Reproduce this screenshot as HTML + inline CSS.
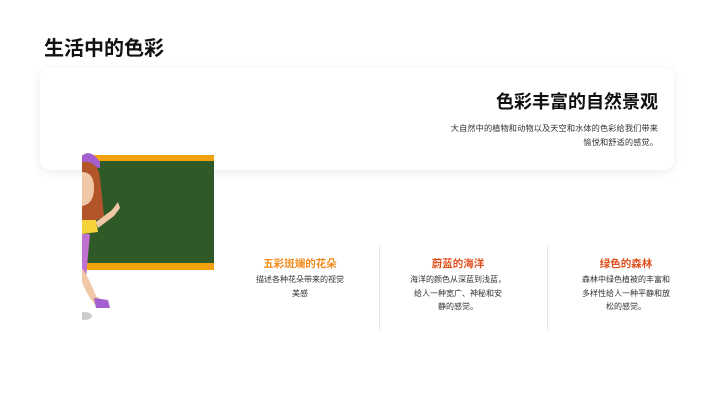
<!DOCTYPE html>
<html><head><meta charset="utf-8"><style>
body{margin:0;width:720px;height:404px;background:#fff;position:relative;overflow:hidden;font-family:"Liberation Sans","Noto Sans CJK SC",sans-serif;}
.a{position:absolute;}
h1{position:absolute;left:44px;top:32px;margin:0;font-size:20px;font-weight:bold;color:#111;}
.card{left:40px;top:68px;width:634px;height:102px;border-radius:10px;background:#fff;box-shadow:0 2px 10px rgba(0,0,0,0.08);}
.h2{right:62px;top:88px;font-size:18px;font-weight:bold;color:#111;}
.p{right:62px;top:122px;font-size:8.2px;line-height:14px;text-align:right;color:#333;white-space:nowrap;letter-spacing:0.1px;}
.col{top:256px;width:110px;text-align:center;font-size:8px;line-height:13.5px;color:#333;white-space:nowrap;}
.col b{display:block;font-size:10.5px;line-height:16px;margin-bottom:1px;}
.div{top:246px;width:1px;height:84px;background:#e6e6e6;}
</style></head><body>
<h1>生活中的色彩</h1>
<div class="a card"></div>
<div class="a h2">色彩丰富的自然景观</div>
<div class="a p">大自然中的植物和动物以及天空和水体的色彩给我们带来<br>愉悦和舒适的感觉。</div>
<div class="a" style="left:82px;top:155px;width:132px;height:115px;background:#f2a20c;"></div>
<div class="a" style="left:82px;top:161px;width:132px;height:102px;background:#2f5a28;"></div>
<svg class="a" style="left:82px;top:148px" width="40" height="175" viewBox="0 0 40 175">
<path d="M0 8 Q8 0 18 14 L18 20 L0 18Z" fill="#a35fd0"/>
<path d="M0 14 Q16 12 18 30 L22 68 Q14 74 8 72 L0 72Z" fill="#b2562a"/>
<path d="M0 24 Q12 24 12 40 Q12 56 0 58Z" fill="#f1c8a6"/>
<path d="M0 72 L14 72 L16 84 L0 86Z" fill="#f3d23a"/>
<path d="M14 74 L30 62 L36 54 L38 60 L32 68 L16 80Z" fill="#f1c8a6"/>
<path d="M0 86 L8 86 L4 130 L0 130Z" fill="#c070d0"/>
<path d="M0 120 Q6 128 14 148 L20 152 L14 158 L8 150 Q2 140 0 134Z" fill="#f1c8a6"/>
<path d="M12 150 L26 152 L28 160 L14 160Z" fill="#a35fd0"/>
<ellipse cx="2" cy="168" rx="8" ry="4" fill="#ccc"/>
</svg>
<div class="a div" style="left:379px"></div>
<div class="a div" style="left:547px"></div>
<div class="a col" style="left:245px;"><b style="color:#f08a1c">五彩斑斓的花朵</b>描述各种花朵带来的视觉<br>美感</div>
<div class="a col" style="left:403px;"><b style="color:#e0501e">蔚蓝的海洋</b>海洋的颜色从深蓝到浅蓝，<br>给人一种宽广、神秘和安<br>静的感觉。</div>
<div class="a col" style="left:571px;"><b style="color:#e0501e">绿色的森林</b>森林中绿色植被的丰富和<br>多样性给人一种平静和放<br>松的感觉。</div>
</body></html>
